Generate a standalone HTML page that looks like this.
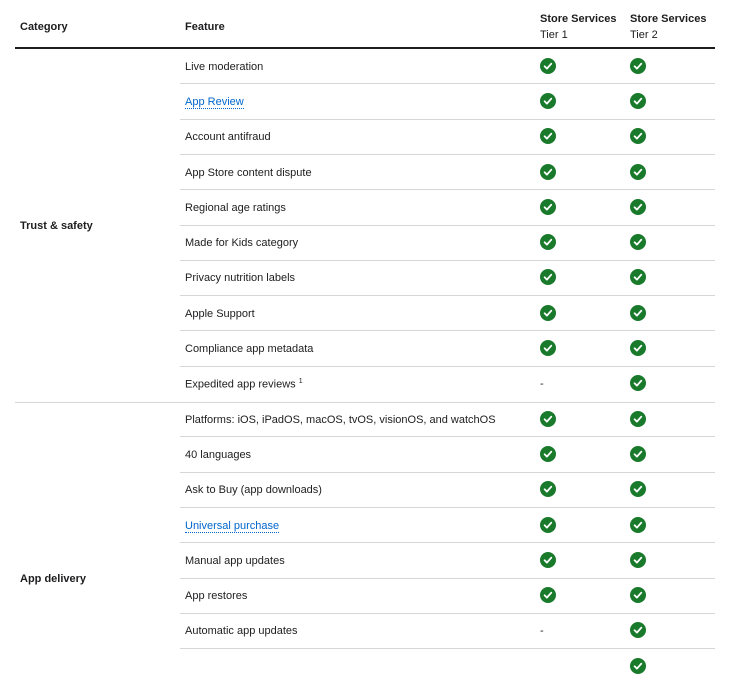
<!DOCTYPE html>
<html><head><meta charset="utf-8"><style>
*{margin:0;padding:0}
body{width:750px;height:661px;background:#fff;position:relative;overflow:hidden;font-family:"Liberation Sans",sans-serif;font-size:11px;color:#1d1d1f}
.a{position:absolute;white-space:nowrap}
.h{font-weight:bold;font-size:11px}
.ln{position:absolute;height:1px;background:#d6d6d6}
.f{left:185px}
.lk{color:#0066cc;border-bottom:1px dotted #0066cc}
.c{position:absolute;width:16px;height:16px}
.d{position:absolute;font-size:11px}
</style></head><body>
<div class="a h" style="left:20px;top:21px">Category</div>
<div class="a h" style="left:185px;top:21px">Feature</div>
<div class="a h" style="left:540px;top:13px">Store Services</div>
<div class="a" style="left:540px;top:29px">Tier 1</div>
<div class="a h" style="left:630px;top:13px">Store Services</div>
<div class="a" style="left:630px;top:29px">Tier 2</div>
<div class="ln" style="left:15px;width:700px;top:47px;height:2px;background:#1d1d1f"></div>
<div class="a h" style="left:20px;top:220px">Trust &amp; safety</div>
<div class="a h" style="left:20px;top:573px">App delivery</div>
<div class="ln" style="left:15px;width:700px;top:402px"></div>
<svg width="0" height="0" style="position:absolute"><defs><symbol id="k" viewBox="0 0 16 16"><circle cx="8" cy="8" r="8" fill="#1a7a2c"/><path d="M4.6 8.3l2.3 2.3 4.4-4.9" stroke="#fff" stroke-width="1.8" fill="none" stroke-linecap="round" stroke-linejoin="round"/></symbol></defs></svg>
<div id="rows"></div>
<script>
var rows=[["Live moderation",1],["<span class='lk'>App Review</span>",1],["Account antifraud",1],["App Store content dispute",1],["Regional age ratings",1],["Made for Kids category",1],["Privacy nutrition labels",1],["Apple Support",1],["Compliance app metadata",1],["Expedited app reviews <sup style='font-size:7px'>1</sup>",0],
["Platforms: iOS, iPadOS, macOS, tvOS, visionOS, and watchOS",1],["40 languages",1],["Ask to Buy (app downloads)",1],["<span class='lk'>Universal purchase</span>",1],["Manual app updates",1],["App restores",1],["Automatic app updates",0],["",2]];
var h="",y0=48,s=35.3;
rows.forEach(function(r,i){var top=y0+i*s;var cy=top+s/2;
if(i>0&&i!=10)h+="<div class='ln' style='left:180px;width:535px;top:"+Math.round(top)+"px'></div>";
h+="<div class='a f' style='top:"+Math.round(cy-5)+"px'>"+r[0]+"</div>";
var c=function(x){return "<svg class='c' style='left:"+(x-8)+"px;top:"+Math.round(cy-8)+"px'><use href='#k'/></svg>"};
if(r[1]==1)h+=c(548);else if(r[1]==0)h+="<div class='d' style='left:540px;top:"+Math.round(cy-5)+"px'>-</div>";
h+=c(638);
});
document.getElementById("rows").innerHTML=h;
</script>
</body></html>
